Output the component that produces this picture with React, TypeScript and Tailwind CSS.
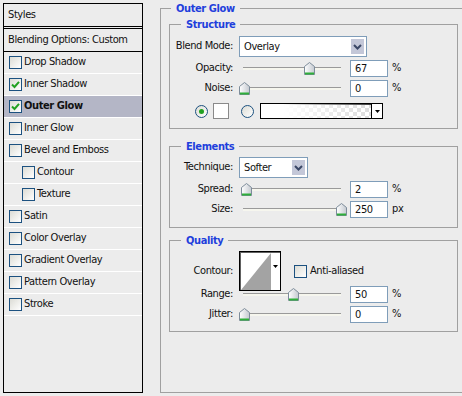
import React from "react";

const effects = [
  { name: "Drop Shadow" },
  { name: "Inner Shadow", checked: true },
  { name: "Outer Glow", checked: true, active: true },
  { name: "Inner Glow" },
  { name: "Bevel and Emboss" },
  { name: "Contour", indent: true },
  { name: "Texture", indent: true },
  { name: "Satin" },
  { name: "Color Overlay" },
  { name: "Gradient Overlay" },
  { name: "Pattern Overlay" },
  { name: "Stroke" },
];

const Checkbox = ({ checked }: { checked?: boolean }) => (
  <span className="w-[13px] h-[13px] shrink-0 border border-[#1c5180] bg-[linear-gradient(135deg,#dcdcd5,#ffffff)] flex items-center justify-center">
    {checked && (
      <svg width="9" height="9" viewBox="0 0 9 9">
        <path d="M1 4.5 L3.5 7 L8 1.8" fill="none" stroke="#21a121" strokeWidth="2" />
      </svg>
    )}
  </span>
);

const Radio = ({ on }: { on?: boolean }) => (
  <span className="w-[13px] h-[13px] shrink-0 rounded-full border border-[#1c5180] bg-[linear-gradient(135deg,#dcdcd5,#ffffff)] flex items-center justify-center">
    {on && <span className="w-[5px] h-[5px] rounded-full bg-[#21a121]" />}
  </span>
);

const Thumb = () => (
  <svg width="11" height="13" viewBox="0 0 11 13">
    <defs>
      <linearGradient id="thumbFill" x1="0" x2="1" y1="0" y2="0">
        <stop offset="0" stopColor="#ffffff" />
        <stop offset="1" stopColor="#c4c9d0" />
      </linearGradient>
    </defs>
    <path d="M0.5 4.5 L5.5 0.5 L10.5 4.5 V12.5 H0.5 Z" fill="url(#thumbFill)" stroke="#7d8c9a" />
    <rect x="1" y="10.5" width="9" height="2" fill="#2fae3a" />
  </svg>
);

const Slider = ({ pct }: { pct: number }) => (
  <div className="relative w-[107px] h-[17px] shrink-0">
    <div className="mt-[7px] ml-[4px] w-[98px] h-[3px] border-t border-[#9a9a9a] bg-[#f6f6ee]" />
    <div className="absolute top-[2px]" style={{ left: `${Math.round(pct * 97)}px` }}>
      <Thumb />
    </div>
  </div>
);

const Chevron = () => (
  <svg width="9" height="6" viewBox="0 0 9 6">
    <path d="M1 1 L4.5 4.5 L8 1" fill="none" stroke="#3a4766" strokeWidth="2" />
  </svg>
);

const Select = ({ text, w }: { text: string; w: string }) => (
  <div className={`${w} h-[21px] flex border border-[#7f9db9] bg-white`}>
    <span className="flex-1 pl-[4px] leading-[19px]">{text}</span>
    <span className="w-[15px] m-[1px] ml-0 bg-[#c3c7d8] border border-white flex items-center justify-center">
      <Chevron />
    </span>
  </div>
);

const Row = ({ label, className, children }: { label: string; className?: string; children: React.ReactNode }) => (
  <div className={`flex items-center ${className}`}>
    <span className="w-[63px] shrink-0 text-right">{label}</span>
    <div className="ml-[6px] flex items-center">{children}</div>
  </div>
);

const ValueRow = ({ label, pct, value, unit, className }: { label: string; pct: number; value: string; unit: string; className?: string }) => (
  <Row label={label} className={className}>
    <Slider pct={pct} />
    <span className="ml-[4px] w-[38px] h-[17px] border border-[#7f9db9] bg-white pl-[4px] leading-[15px]">{value}</span>
    <span className="ml-[4px]">{unit}</span>
  </Row>
);

const Group = ({ title, className, children }: { title: string; className?: string; children: React.ReactNode }) => (
  <fieldset className={`ml-[8px] w-[289px] border border-[#a0a0a0] ${className}`}>
    <legend className="ml-[11px] px-[5px] font-bold text-[#1f3fdc] leading-[13px]">{title}</legend>
    {children}
  </fieldset>
);

export default function App() {
  return (
    <div className="w-[462px] h-[396px] overflow-hidden bg-[#ececec] flex items-start text-[11px] tracking-[-0.4px] text-[#111] font-['DejaVu_Sans_Condensed','Liberation_Sans',sans-serif]">
      <div className="ml-[3px] mt-[3px] w-[140px] h-[390px] shrink-0 border border-black flex flex-col">
        <div className="h-[22px] pl-[4px] flex items-center">Styles</div>
        <div className="h-[3px] border-y border-black" />
        <div className="h-[23px] pl-[4px] flex items-center border-b border-black">Blending Options: Custom</div>
        {effects.map((e) => (
          <div
            key={e.name}
            className={`h-[22px] flex items-center border-b border-white ${e.indent ? "pl-[18px]" : "pl-[5px]"} ${e.active ? "bg-[#b4b6c6] font-bold" : ""}`}
          >
            <Checkbox checked={e.checked} />
            <span className="ml-[2px]">{e.name}</span>
          </div>
        ))}
      </div>

      <fieldset className="ml-[17px] mt-[2px] w-[312px] h-[391px] shrink-0 border border-[#a0a0a0]">
        <legend className="ml-[10px] px-[5px] font-bold text-[#1f3fdc] leading-[13px]">Outer Glow</legend>

        <Group title="Structure" className="mt-[3px] pb-[9px]">
          <Row label="Blend Mode:" className="mt-[5px]">
            <Select text="Overlay" w="w-[128px]" />
          </Row>
          <ValueRow label="Opacity:" pct={0.67} value="67" unit="%" className="mt-[3px]" />
          <ValueRow label="Noise:" pct={0} value="0" unit="%" className="mt-[3px]" />
          <div className="mt-[6px] ml-[25px] flex items-center">
            <Radio on />
            <span className="ml-[5px] w-[16px] h-[16px] border border-[#8a8a8a] bg-white" />
            <span className="ml-[12px]">
              <Radio />
            </span>
            <div className="ml-[6px] w-[123px] h-[16px] flex border border-black shadow-[inset_1px_1px_0_#404040] bg-[repeating-conic-gradient(#dcdcdc_0%_25%,#ffffff_0%_50%)] bg-[length:8px_8px]">
              <div className="flex-1 bg-[linear-gradient(to_right,#ffffff_20%,rgba(255,255,255,0))]" />
              <div className="w-[11px] border-l border-black bg-white flex items-center justify-center">
                <svg width="5" height="3" viewBox="0 0 5 3">
                  <path d="M0 0 H5 L2.5 3 Z" fill="#000" />
                </svg>
              </div>
            </div>
          </div>
        </Group>

        <Group title="Elements" className="mt-[11px] pb-[9px]">
          <Row label="Technique:" className="mt-[4px]">
            <Select text="Softer" w="w-[69px]" />
          </Row>
          <ValueRow label="Spread:" pct={0.02} value="2" unit="%" className="mt-[3px]" />
          <ValueRow label="Size:" pct={1} value="250" unit="px" className="mt-[3px]" />
        </Group>

        <Group title="Quality" className="mt-[6px] pb-[8px]">
          <Row label="Contour:" className="mt-[4px] h-[40px]">
            <div className="w-[42px] h-[40px] flex border border-black bg-white shadow-[inset_1px_1px_0_#606060]">
              <svg width="31" height="38" viewBox="0 0 31 38">
                <polygon points="1,38 31,1 31,38" fill="#a3a3a3" />
              </svg>
              <div className="w-[9px] pt-[13px] flex justify-center">
                <svg width="5" height="3" viewBox="0 0 5 3">
                  <path d="M0 0 H5 L2.5 3 Z" fill="#000" />
                </svg>
              </div>
            </div>
            <span className="ml-[13px]">
              <Checkbox />
            </span>
            <span className="ml-[3px]">Anti-aliased</span>
          </Row>
          <ValueRow label="Range:" pct={0.5} value="50" unit="%" className="-mt-[5px]" />
          <ValueRow label="Jitter:" pct={0} value="0" unit="%" className="mt-[3px]" />
        </Group>
      </fieldset>
    </div>
  );
}
